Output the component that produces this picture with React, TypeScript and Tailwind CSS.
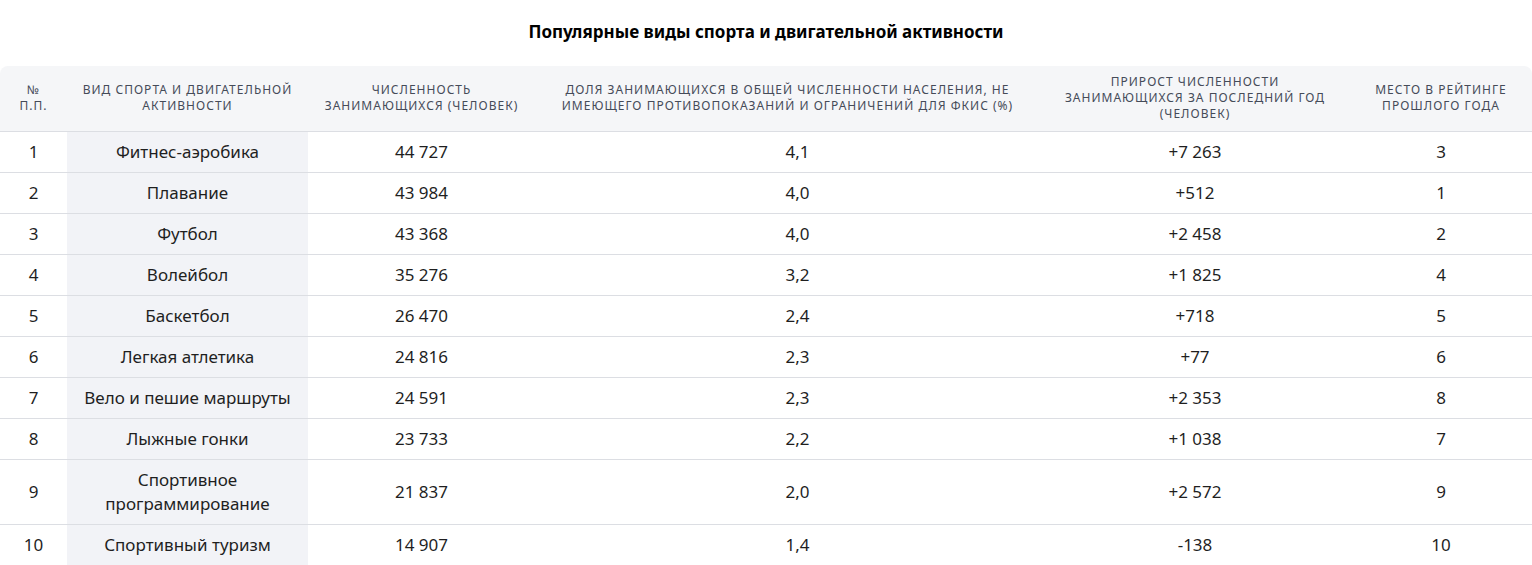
import React from "react"

const HEAD = [
  "№ п.п.",
  "Вид спорта и двигательной активности",
  "Численность занимающихся (человек)",
  "Доля занимающихся в общей численности населения, не имеющего противопоказаний и ограничений для ФКиС (%)",
  "Прирост численности занимающихся за последний год (человек)",
  "Место в рейтинге прошлого года",
]

const ROWS: [number, string, string, string, string, number][] = [
  [1, "Фитнес-аэробика", "44 727", "4,1", "+7 263", 3],
  [2, "Плавание", "43 984", "4,0", "+512", 1],
  [3, "Футбол", "43 368", "4,0", "+2 458", 2],
  [4, "Волейбол", "35 276", "3,2", "+1 825", 4],
  [5, "Баскетбол", "26 470", "2,4", "+718", 5],
  [6, "Легкая атлетика", "24 816", "2,3", "+77", 6],
  [7, "Вело и пешие маршруты", "24 591", "2,3", "+2 353", 8],
  [8, "Лыжные гонки", "23 733", "2,2", "+1 038", 7],
  [9, "Спортивное программирование", "21 837", "2,0", "+2 572", 9],
  [10, "Спортивный туризм", "14 907", "1,4", "-138", 10],
]

const headPad = ["px-[14px]", "px-1", "px-3", "px-6", "px-6", "px-6"]

export default function App() {
  return (
    <div className="w-[1532px] bg-white text-[#1f1f1f]" style={{ fontFamily: '"Noto Sans", "Open Sans", sans-serif' }}>
      <h1 className="pt-[19px] pb-[22px] text-center text-[17px] font-bold leading-[25px] text-black">
        Популярные виды спорта и двигательной активности
      </h1>
      <table className="w-full table-fixed border-collapse">
        <colgroup>
          <col className="w-[67px]" />
          <col className="w-[241px]" />
          <col className="w-[227px]" />
          <col className="w-[505px]" />
          <col className="w-[310px]" />
          <col />
        </colgroup>
        <thead>
          <tr>
            {HEAD.map((h, i) => (
              <th
                key={i}
                className={`bg-[#f5f6f8] ${headPad[i]} py-2 h-[65px] border-b border-[#dcdee3] text-center align-middle text-[12px] font-normal uppercase leading-[16px] tracking-[0.085em] text-[#454b58] ${i === 0 ? "rounded-tl-[8px]" : ""} ${i === 5 ? "rounded-tr-[8px]" : ""}`}
              >
                {h}
              </th>
            ))}
          </tr>
        </thead>
        <tbody>
          {ROWS.map(r => (
            <tr key={r[0]} className="border-b border-[#dcdee3]">
              <td className="py-2 text-center text-[17px] leading-[24px]">{r[0]}</td>
              <td className="bg-[#f2f3f7] px-3 py-2 text-center text-[17px] leading-[24px]">{r[1]}</td>
              <td className="py-2 text-center text-[17px] leading-[24px]">{r[2]}</td>
              <td className="py-2 pl-[20px] text-center text-[17px] leading-[24px]">{r[3]}</td>
              <td className="py-2 text-center text-[17px] leading-[24px]">{r[4]}</td>
              <td className="py-2 text-center text-[17px] leading-[24px]">{r[5]}</td>
            </tr>
          ))}
        </tbody>
      </table>
    </div>
  )
}
